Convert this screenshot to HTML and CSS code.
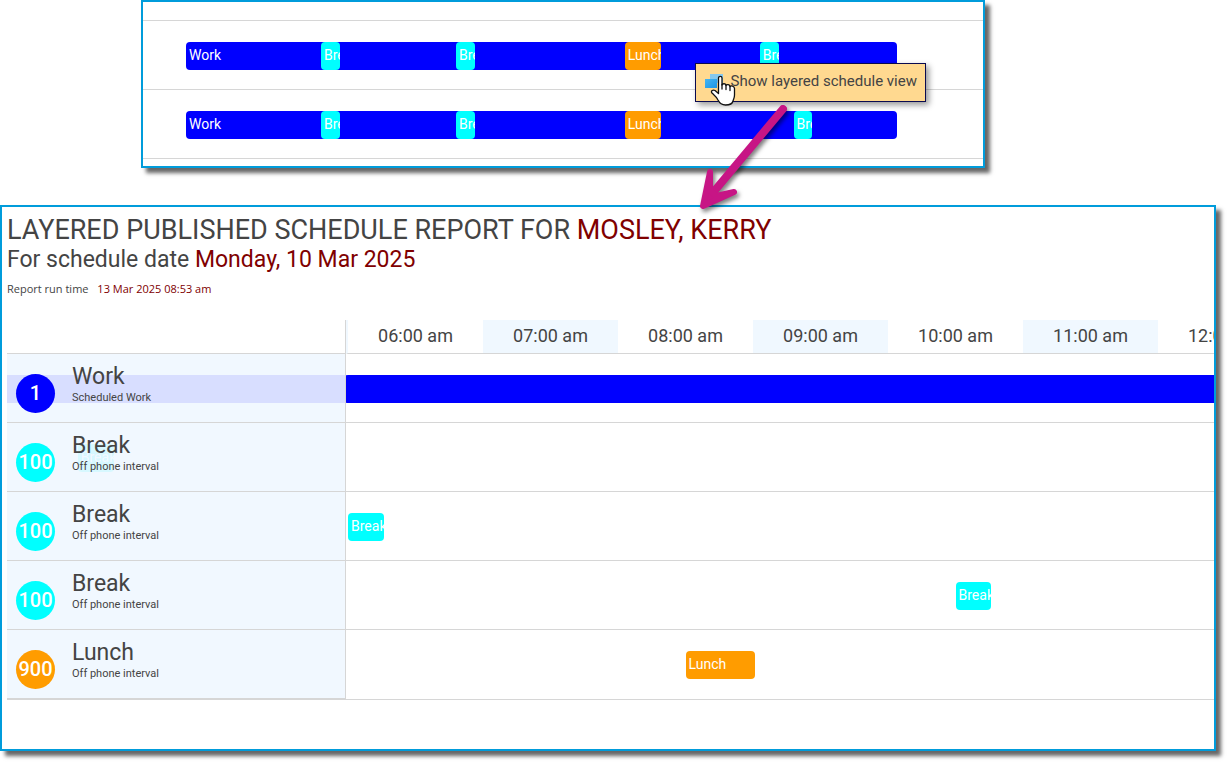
FILE: index.html
```html
<!DOCTYPE html>
<html lang="en">
  <head>
    <meta charset="UTF-8" />
    <meta name="viewport" content="width=device-width, initial-scale=1.0" />
    <title>Layered published schedule report</title>
    <link rel="stylesheet" href="styles.css">
  </head>
  <body>
    <main class="page">
      <section class="panel overview">
        <div class="line"></div>
        <div class="line">
          <div class="track">
            <div class="bar work" style="--start: 0; --length: 630">Work</div>
            <div class="bar break" style="--start: 120; --length: 15">Break</div>
            <div class="bar break" style="--start: 240; --length: 15">Break</div>
            <div class="bar lunch" style="--start: 390; --length: 30">Lunch</div>
            <div class="bar break" style="--start: 510; --length: 15">Break</div>
          </div>
        </div>
        <div class="line">
          <div class="track">
            <div class="bar work" style="--start: 0; --length: 630">Work</div>
            <div class="bar break" style="--start: 120; --length: 15">Break</div>
            <div class="bar break" style="--start: 240; --length: 15">Break</div>
            <div class="bar lunch" style="--start: 390; --length: 30">Lunch</div>
            <div class="bar break" style="--start: 540; --length: 15">Break</div>
          </div>
        </div>

        <!-- context menu with the mouse pointer on it -->
        <button type="button" class="menu">
          <svg class="layers" width="20" height="16" viewBox="0 0 20 16" aria-hidden="true">
            <defs>
              <linearGradient id="front" x1="0" y1="0" x2="1" y2="1">
                <stop offset="0" stop-color="#45b5f2" />
                <stop offset="1" stop-color="#1b95e6" />
              </linearGradient>
            </defs>
            <rect x="5" y="1" width="13" height="9" fill="#86c8ee" />
            <rect x="0" y="6" width="12" height="9" fill="url(#front)" />
          </svg>
          Show layered schedule view
        </button>
        <svg class="pointer" width="26" height="32" viewBox="0 0 26 32" aria-hidden="true">
          <path d="M8.500 3.000C8.500 .8 12 .8 12 3V10C12.500 8.200 16 8.300 16 10.500C16.800 9 19.800 9.500 20 11.600C21 10.300 24.500 11 24.500 13.500V20C24.500 23 23.500 24 23 26C22.500 28.500 19.500 30 15.500 30C11.500 30 9.500 28 8 25C6.500 21.500 4 20 2 18C.5 16 3 14.300 5 15.500L8.500 18.500Z" fill="#fff" stroke="#111" stroke-width="1.300" stroke-linejoin="round" />
          <path d="M12 9.500V14M16 10.500V14.500M20 11.600V15.500" fill="none" stroke="#111" stroke-width="1.300" stroke-linecap="round" />
        </svg>
        <svg class="arrow" width="100" height="115" viewBox="0 0 100 115" aria-hidden="true">
          <path d="M91 9L19 95" stroke="#c71585" stroke-width="8" stroke-linecap="round" />
          <path d="M18 72L11 106L42 92L24 96L18 90Z" fill="#c71585" stroke="#c71585" stroke-width="6" stroke-linejoin="round" />
        </svg>
      </section>

      <section class="panel report">
        <h1>LAYERED PUBLISHED SCHEDULE REPORT FOR <span>MOSLEY, KERRY</span></h1>
        <h2>For schedule date <span>Monday, 10 Mar 2025</span></h2>
        <p class="run-time">Report run time <span>13 Mar 2025 08:53 am</span></p>

        <div class="chart">
          <div class="row head">
            <div class="corner"></div>
            <div class="hours">
              <span>06:00 am</span>
              <span>07:00 am</span>
              <span>08:00 am</span>
              <span>09:00 am</span>
              <span>10:00 am</span>
              <span>11:00 am</span>
              <span>12:00 pm</span>
            </div>
          </div>
          <div class="row">
            <div class="name">
              <div class="ghost work"></div>
              <div class="badge work">1</div>
              <div class="text">
                <h3>Work</h3>
                <p>Scheduled Work</p>
              </div>
            </div>
            <div class="track">
              <div class="bar work" style="--start: -2; --length: 632"></div>
            </div>
          </div>
          <div class="row">
            <div class="name">
              <div class="ghost early break">Break</div>
              <div class="badge break">100</div>
              <div class="text">
                <h3>Break</h3>
                <p>Off phone interval</p>
              </div>
            </div>
            <div class="track"></div>
          </div>
          <div class="row">
            <div class="name">
              <div class="badge break">100</div>
              <div class="text">
                <h3>Break</h3>
                <p>Off phone interval</p>
              </div>
            </div>
            <div class="track">
              <div class="bar break" style="--start: 0; --length: 15">Break</div>
            </div>
          </div>
          <div class="row">
            <div class="name">
              <div class="badge break">100</div>
              <div class="text">
                <h3>Break</h3>
                <p>Off phone interval</p>
              </div>
            </div>
            <div class="track">
              <div class="bar break" style="--start: 270; --length: 15">Break</div>
            </div>
          </div>
          <div class="row">
            <div class="name">
              <div class="badge lunch">900</div>
              <div class="text">
                <h3>Lunch</h3>
                <p>Off phone interval</p>
              </div>
            </div>
            <div class="track">
              <div class="bar lunch" style="--start: 150; --length: 30">Lunch</div>
            </div>
          </div>
        </div>
      </section>
    </main>
  </body>
</html>
```

FILE: styles.css
```css
* {
  box-sizing: border-box;
}

body {
  margin: 0;
  background-color: white;
  color: #444;
  font-family: Roboto, sans-serif;
  font-size: 14px;
}

h1,
h2,
h3,
p {
  margin: 0;
  font-weight: 400;
}

.page {
  padding: 0 14px 14px 0;
}

.panel {
  background-color: white;
  border: 2px solid #009cdb;
  box-shadow: 5px 5px 4px rgba(0, 0, 0, 0.6);
}

/* top panel: flat schedule */
.overview {
  position: relative;
  margin: 0 231px 37px 141px;
  padding-bottom: 7px;
  --hour: calc(135px / 2);
}

.line {
  height: 69px;
  padding: 21px 43px 0;
  border-bottom: 1px solid #d6d6d6;
}
.line:first-child {
  height: 19px;
  padding: 0;
}

.track {
  display: grid;
  align-items: start;
  justify-items: start;
}

/* --start and --length are minutes */
.bar {
  grid-area: 1 / 1;
  width: calc(var(--length) * var(--hour) / 60 + 2px);
  height: 28px;
  margin-left: calc(var(--start) * var(--hour) / 60);
  padding-left: 3px;
  border-radius: 4px;
  color: white;
  line-height: 26px;
  white-space: nowrap;
  overflow: hidden;
}

.work {
  background-color: #0000ff;
}
.break {
  background-color: #00ffff;
}
.lunch {
  background-color: #ff9c00;
}

.menu {
  position: absolute;
  top: 61px;
  right: 57px;
  display: flex;
  align-items: center;
  gap: 6px;
  height: 39px;
  padding: 0 8px 4px 9px;
  border: 1px solid #0a0a50;
  background-color: #ffd990;
  box-shadow: 3px 3px 6px rgba(0, 0, 0, 0.4);
  color: #444;
  font-family: inherit;
  font-size: 15px;
  white-space: nowrap;
}

.pointer {
  position: absolute;
  top: 73px;
  right: 247px;
}

.arrow {
  position: absolute;
  top: 98px;
  right: 191px;
  filter: drop-shadow(2px 3px 2px rgba(0, 0, 0, 0.5));
}

/* bottom panel: layered schedule */
.report {
  padding: 8px 0 49px 5px;
  overflow: hidden;
  --hour: 135px;
}

h1 {
  font-size: 27px;
  line-height: 30px;
}
h2 {
  font-size: 23px;
  line-height: 30px;
}
.report span {
  color: #800000;
}

.run-time {
  margin-top: 6px;
  font-family: "Open Sans", sans-serif;
  font-size: 11px;
  line-height: 16px;
}
.run-time span {
  margin-left: 6px;
}

.chart {
  margin-top: 23px;
  border-bottom: 1px solid #d6d6d6;
}

.row {
  display: grid;
  grid-template-columns: 339px 1fr;
  height: 69px;
}
.row.head {
  height: 34px;
}

.name,
.corner {
  border-right: 1px solid #d6d6d6;
  border-bottom: 1px solid #d6d6d6;
}

.hours {
  display: flex;
  min-width: 0;
  border-bottom: 1px solid #d6d6d6;
  border-left: 2px solid #f0f8ff;
  overflow: hidden;
}
.hours span {
  flex: 0 0 var(--hour);
  color: #444;
  font-size: 18px;
  line-height: 32px;
  text-align: center;
}
.hours span:nth-child(even) {
  background-color: #f0f8ff;
}

.name {
  position: relative;
  display: flex;
  gap: 17px;
  padding-left: 9px;
  background-color: #f1f8ff;
}

.row .track {
  min-width: 0;
  padding: 21px 0 0 2px;
  border-bottom: 1px solid #d6d6d6;
  overflow: hidden;
}
.row:last-child .track {
  border-bottom: none;
}

.badge {
  position: relative;
  width: 39px;
  height: 39px;
  margin-top: 20px;
  border-radius: 50%;
  color: white;
  font-size: 20px;
  font-weight: 500;
  line-height: 39px;
  text-align: center;
}

.text {
  position: relative;
  padding-top: 8px;
}
.text h3 {
  font-size: 23px;
  line-height: 30px;
}
.text p {
  font-size: 11px;
  line-height: 12px;
}

/* bars that have scrolled under the name column */
.ghost {
  position: absolute;
  top: 21px;
  left: 0;
  width: 100%;
  height: 28px;
  color: white;
  line-height: 26px;
  opacity: 0.1;
}
.ghost.early {
  left: 71px;
  width: 36px;
  padding-left: 3px;
  border-radius: 4px;
  overflow: hidden;
}
```
